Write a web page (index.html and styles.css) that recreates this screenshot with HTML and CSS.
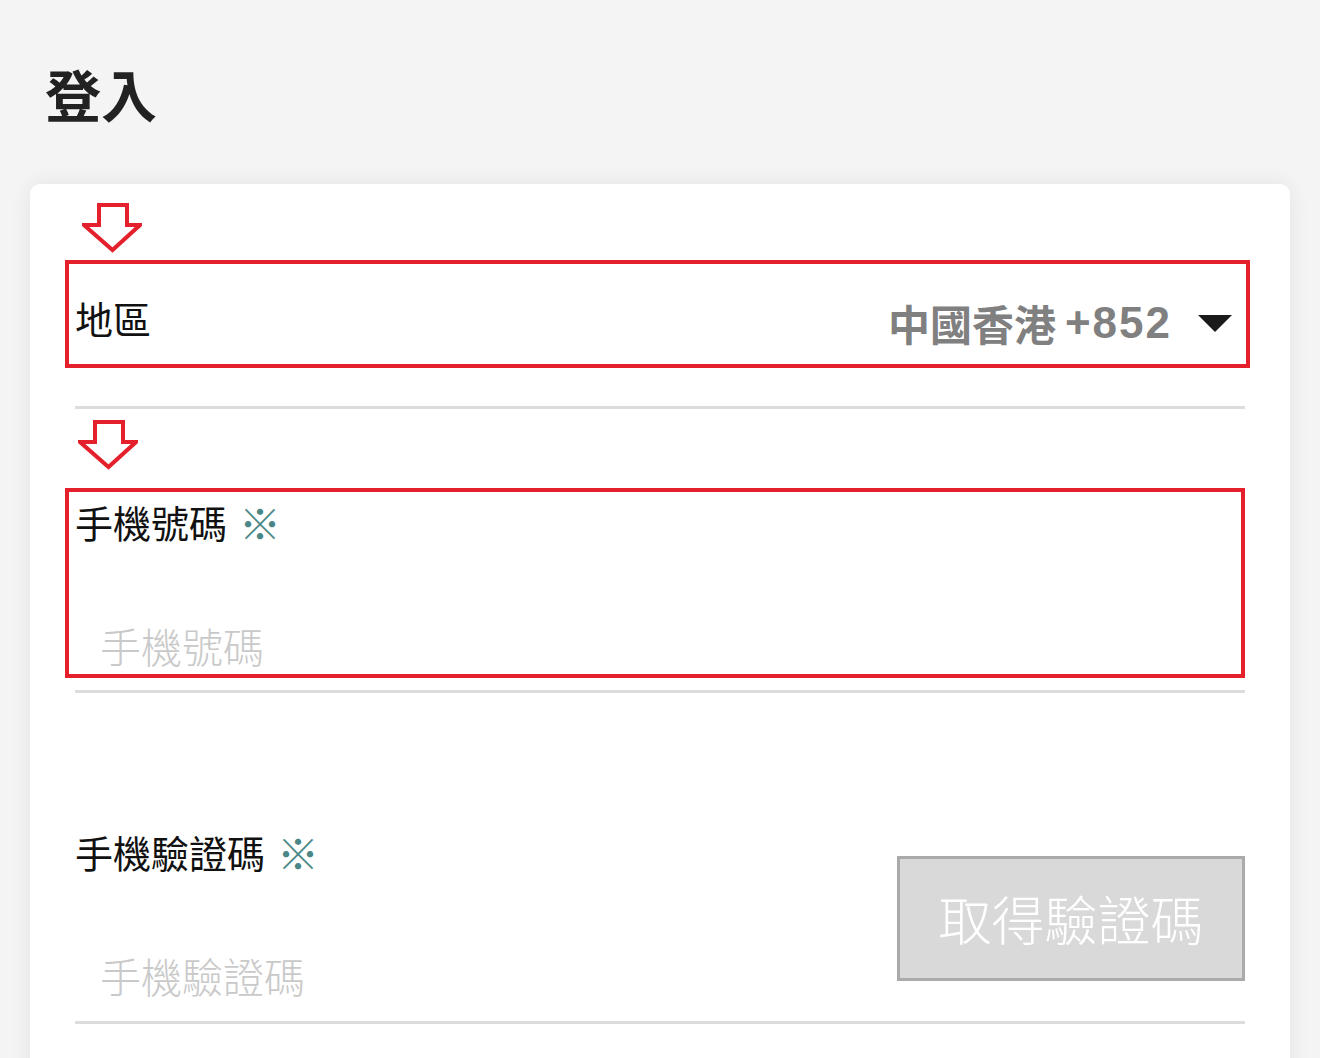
FILE: index.html
```html
<!DOCTYPE html>
<html lang="zh-Hant">
<head>
<meta charset="utf-8">
<title>登入</title>
<link rel="stylesheet" href="styles.css">
</head>
<body>
  <h1 class="page-title">登入</h1>
  <main class="card">
    <div class="hint-arrow hint-arrow--first">
      <svg width="60" height="50" viewBox="0 0 60 50"><polygon points="17,2 45,2 45,22 58,22 30.5,47 2,22 17,22" fill="#fff" stroke="#e3202b" stroke-width="4" stroke-linejoin="miter"/></svg>
    </div>
    <div class="mark-box region-row">
      <span class="field-label">地區</span>
      <span class="region-value"><span class="region-name">中國香港</span><span class="region-code">+852</span><span class="caret"></span></span>
    </div>
    <div class="divider divider--first"></div>

    <div class="hint-arrow hint-arrow--second">
      <svg width="60" height="50" viewBox="0 0 60 50"><polygon points="17,2 45,2 45,22 58,22 30.5,47 2,22 17,22" fill="#fff" stroke="#e3202b" stroke-width="4" stroke-linejoin="miter"/></svg>
    </div>
    <div class="mark-box phone-box">
      <div class="field-label">手機號碼<span class="req">※</span></div>
      <input class="field-input field-input--boxed" type="text" placeholder="手機號碼">
    </div>
    <div class="divider divider--second"></div>

    <div class="code-row">
      <div class="code-col">
        <div class="field-label">手機驗證碼<span class="req">※</span></div>
        <input class="field-input" type="text" placeholder="手機驗證碼">
      </div>
      <button class="code-btn" type="button">取得驗證碼</button>
    </div>
    <div class="divider divider--third"></div>
  </main>
</body>
</html>
```

FILE: styles.css
```css
* {
  box-sizing: border-box;
}

html, body {
  margin: 0;
  padding: 0;
}

body {
  background: #f4f4f4;
  font-family: "Noto Sans CJK TC", "Noto Sans", sans-serif;
  color: #1a1a1a;
  padding: 0 30px;
  height: 1058px;
  overflow: hidden;
}

.page-title {
  margin: 59px 0 0 15px;
  font-size: 56px;
  line-height: 1.2;
  font-weight: 700;
  color: #222;
  height: 67px;
}

.card {
  margin-top: 58px;
  background: #fff;
  border-radius: 10px;
  box-shadow: 0 0 22px rgba(0, 0, 0, 0.07);
  padding: 19px 45px 200px 45px;
}

.hint-arrow {
  height: 50px;
  display: flex;
}
.hint-arrow svg {
  display: block;
}
.hint-arrow--first {
  padding-left: 7px;
}
.hint-arrow--second {
  margin-top: 11px;
  padding-left: 3px;
}

.mark-box {
  border: 4px solid #e3202b;
  margin-left: -10px;
}

.region-row {
  margin-top: 7px;
  margin-right: -5px;
  height: 108px;
  padding: 8px 14px 0 6px;
  display: flex;
  align-items: center;
  justify-content: space-between;
}

.field-label {
  font-size: 38px;
  line-height: 46px;
  height: 46px;
  color: #111;
  font-weight: 400;
  white-space: nowrap;
  display: flex;
  align-items: center;
}

.req {
  color: #4b8787;
  font-size: 42px;
  margin-left: 12px;
}

.region-value {
  margin-top: 10px;
  display: flex;
  align-items: center;
  font-weight: 700;
  line-height: 50px;
  color: #808080;
  white-space: nowrap;
}

.region-name {
  font-size: 42px;
}

.region-code {
  font-family: "Liberation Sans", sans-serif;
  font-size: 44px;
  letter-spacing: 2px;
  margin-left: 9px;
}

.caret {
  display: inline-block;
  width: 0;
  height: 0;
  margin-left: 26px;
  border-left: 17px solid transparent;
  border-right: 17px solid transparent;
  border-top: 17px solid #1a1a1a;
}

.divider {
  height: 3px;
  background: #dcdcdc;
}
.divider--first {
  margin-top: 38px;
}
.divider--second {
  margin-top: 12px;
}
.divider--third {
  margin-top: 21px;
}

.phone-box {
  margin-top: 18px;
  height: 190px;
  padding: 7px 0 3px 6px;
}

.field-input {
  display: block;
  width: 100%;
  margin-top: 76px;
  border: none;
  outline: none;
  background: transparent;
  padding: 0 0 0 25px;
  height: 49px;
  font-family: "Noto Sans CJK TC", sans-serif;
  font-size: 41px;
  line-height: 49px;
  font-weight: 300;
  color: #333;
}
.field-input--boxed {
  padding-left: 25px;
}
.field-input::placeholder {
  color: #c9c9c9;
  opacity: 1;
}

.code-row {
  margin-top: 136px;
  display: flex;
  align-items: center;
  justify-content: space-between;
}

.code-col {
  flex: 1;
  min-width: 0;
}

.code-btn {
  width: 348px;
  height: 125px;
  margin-top: 8px;
  background: #d9d9d9;
  border: 3px solid #aaaaaa;
  color: #fff;
  font-family: "Noto Sans CJK TC", sans-serif;
  font-size: 53px;
  font-weight: 300;
  padding: 0;
  line-height: 1;
}
```
